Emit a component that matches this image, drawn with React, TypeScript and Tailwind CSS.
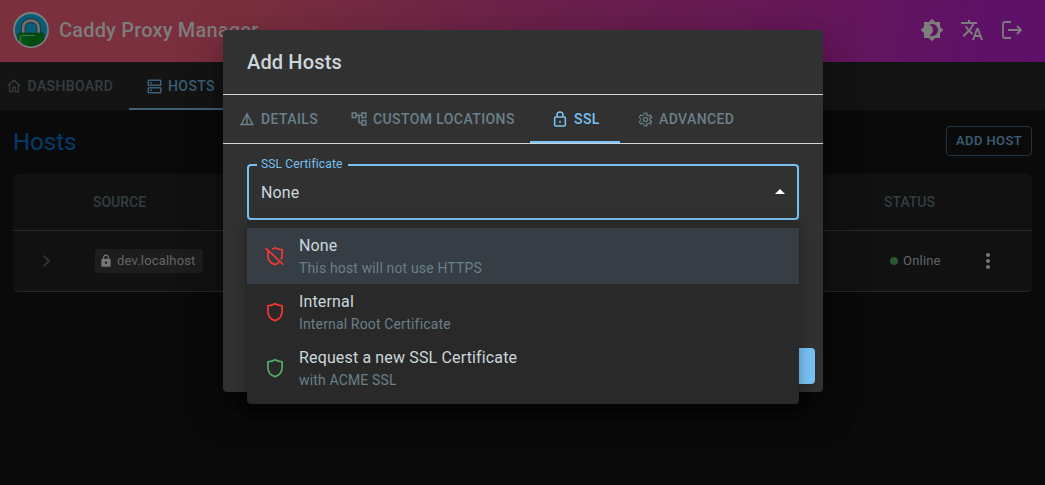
import React from "react";

type P = { d: string; className?: string; size?: number };
const Ico = ({ d, className = "", size = 16 }: P) => (
  <svg width={size} height={size} viewBox="0 0 24 24" fill="currentColor" fillRule="evenodd" className={"shrink-0 " + className}>
    <path d={d} />
  </svg>
);

const line = (children: React.ReactNode, size = 14, width = 2, extra = "") => (
  <svg width={size} height={size} viewBox="0 0 24 24" fill="none" stroke="currentColor" strokeWidth={width} strokeLinejoin="miter" className={"shrink-0 " + extra}>
    {children}
  </svg>
);

const BRIGHTNESS = "M20 8.69V4h-4.69L12 .69 8.69 4H4v4.69L.69 12 4 15.31V20h4.69L12 23.31 15.31 20H20v-4.69L23.31 12 20 8.69zM12 18c-.89 0-1.74-.2-2.5-.55C11.56 16.5 13 14.42 13 12s-1.44-4.5-3.5-5.45C10.26 6.2 11.11 6 12 6c3.31 0 6 2.69 6 6s-2.69 6-6 6z";
const TRANSLATE = "m12.87 15.07-2.54-2.51.03-.03c1.74-1.94 2.98-4.17 3.71-6.53H17V4h-7V2H8v2H1v1.99h11.17C11.5 7.92 10.44 9.75 9 11.35 8.07 10.32 7.3 9.19 6.69 8h-2c.73 1.63 1.73 3.17 2.98 4.56l-5.09 5.02L4 19l5-5 3.11 3.11.76-2.04zM18.5 10h-2L12 22h2l1.12-3h4.75L21 22h2l-4.5-12zm-2.62 7 1.62-4.33L19.12 17h-3.24z";
const LOCK = "M18 8h-1V6c0-2.76-2.24-5-5-5S7 3.24 7 6v2H6c-1.1 0-2 .9-2 2v10c0 1.1.9 2 2 2h12c1.1 0 2-.9 2-2V10c0-1.1-.9-2-2-2zm-6 9c-1.1 0-2-.9-2-2s.9-2 2-2 2 .9 2 2-.9 2-2 2zm3.1-9H8.9V6c0-1.71 1.39-3.1 3.1-3.1 1.71 0 3.1 1.39 3.1 3.1v2z";
const TREE = "M22 11V3h-7v3H9V3H2v8h7V8h2v10h4v3h7v-8h-7v3h-2V8h2v3h7zM7 9H4V5h3v4zm10 6h3v4h-3v-4zm0-10h3v4h-3V5z";
const DOTS = "M12 8c1.1 0 2-.9 2-2s-.9-2-2-2-2 .9-2 2 .9 2 2 2zm0 2c-1.1 0-2 .9-2 2s.9 2 2 2 2-.9 2-2-.9-2-2-2zm0 6c-1.1 0-2 .9-2 2s.9 2 2 2 2-.9 2-2-.9-2-2-2z";
const GEAR = "M19.43 12.98c.04-.32.07-.64.07-.98s-.03-.66-.07-.98l2.11-1.65c.19-.15.24-.42.12-.64l-2-3.46a.5.5 0 0 0-.61-.22l-2.49 1c-.52-.4-1.08-.73-1.69-.98l-.38-2.65A.488.488 0 0 0 14 2h-4c-.25 0-.46.18-.49.42l-.38 2.65c-.61.25-1.17.59-1.69.98l-2.49-1a.5.5 0 0 0-.61.22l-2 3.46c-.13.22-.07.49.12.64l2.11 1.65c-.04.32-.07.65-.07.98s.03.66.07.98l-2.11 1.65c-.19.15-.24.42-.12.64l2 3.46c.12.22.39.3.61.22l2.49-1c.52.4 1.08.73 1.69.98l.38 2.65c.03.24.24.42.49.42h4c.25 0 .46-.18.49-.42l.38-2.65c.61-.25 1.17-.59 1.69-.98l2.49 1a.5.5 0 0 0 .61-.22l2-3.46c.12-.22.07-.49-.12-.64l-2.11-1.65zm-1.98-1.71c.04.31.05.52.05.73s-.02.43-.05.73l-.14 1.13 1.97 1.55-.98 1.69-2.32-.94-.95.73c-.41.31-.8.54-1.21.71l-1.04.43-.35 2.47h-1.86l-.35-2.47-1.04-.43c-.43-.18-.81-.4-1.2-.7l-.96-.74-2.33.94-.97-1.68 1.98-1.54-.14-1.13c-.03-.31-.06-.54-.06-.75s.03-.43.06-.73l.14-1.13-1.98-1.54.97-1.68 2.33.94.95-.73c.4-.3.79-.53 1.2-.7l1.05-.43.35-2.47h1.86l.35 2.47 1.04.43c.43.18.81.4 1.2.7l.96.74 2.32-.94.98 1.68-1.97 1.54.14 1.12zM12 8c-2.21 0-4 1.79-4 4s1.79 4 4 4 4-1.79 4-4-1.79-4-4-4zm0 6c-1.1 0-2-.9-2-2s.9-2 2-2 2 .9 2 2-.9 2-2 2z";
const SHIELD = "M12 2.200Q15.500 4.200 20.500 4.500V11c0 5.300-3.200 9.600-8.500 11.300C6.700 20.600 3.500 16.300 3.500 11V4.500Q8.500 4.200 12 2.200z";

const Logo = () => (
  <svg width="36" height="36" viewBox="0 0 36 36" className="shrink-0">
    <defs>
      <clipPath id="disc"><circle cx="18" cy="18" r="16.400" /></clipPath>
      <linearGradient id="body" x1="0" y1="0" x2="1" y2="0">
        <stop offset="0" stopColor="#0d5a1e" />
        <stop offset="0.500" stopColor="#004a0e" />
        <stop offset="1" stopColor="#044d12" />
      </linearGradient>
    </defs>
    <circle cx="18" cy="18" r="17" fill="#055e76" stroke="#7c7f80" strokeWidth="1.800" />
    <g clipPath="url(#disc)">
      <path d="M10.200 22v-6.500a7.700 7 0 0 1 15.400 0V22" fill="none" stroke="#2f3436" strokeWidth="4.800" />
      <path d="M10.200 22v-6.500a7.700 7 0 0 1 15.400 0V22" fill="none" stroke="#6f7274" strokeWidth="2.600" />
      <rect x="4.500" y="21" width="26.500" height="14" rx="2.500" fill="url(#body)" stroke="#06330e" strokeWidth=".6" />
      <path d="M7.500 31v-5.500q0-2 2-2H22" fill="none" stroke="#3f7549" strokeWidth="1" />
    </g>
  </svg>
);

type TabProps = { icon: React.ReactNode; label: string; active?: boolean; className: string };
const DialogTab = ({ icon, label, active, className }: TabProps) => (
  <div className={"relative flex h-12 items-center whitespace-nowrap text-sm font-medium tracking-[0.4px] " + (active ? "text-[#78c0f2] " : "text-[#69808a] ") + className}>
    {icon}
    <span>{label}</span>
    {active && <i className="absolute inset-x-0 bottom-0 h-0.5 bg-[#80c5f5]" />}
  </div>
);

const options = [
  { title: "None", note: "This host will not use HTTPS", color: "text-[#f93732]", off: true },
  { title: "Internal", note: "Internal Root Certificate", color: "text-[#f93732]", off: false },
  { title: "Request a new SSL Certificate", note: "with ACME SSL", color: "text-[#55ad65]", off: false },
];

export default function App() {
  return (
    <div className="relative h-[485px] w-[1045px] overflow-hidden bg-[#0a0a0a] font-[Roboto,sans-serif]">
      <header className="flex h-[62px] items-center bg-[linear-gradient(100deg,#7b303e_0%,#7a2f3e_25%,#6b214a_50%,#65175a_78%,#5e1167_94%,#5d1067_100%)] pb-0.5 pl-[13px] pr-[21px] text-[#7d7d7d]">
        <Logo />
        <span className="ml-[10px] text-xl font-medium tracking-[0.18px]">Caddy Proxy Manager</span>
        <div className="ml-auto flex gap-4">
          <Ico d={BRIGHTNESS} size={24} />
          <Ico d={TRANSLATE} size={24} />
          {line(<path d="M11 4H5a2 2 0 0 0-2 2v12a2 2 0 0 0 2 2h6M8 12h13M17 8l4 4-4 4" />, 24, 1.8)}
        </div>
      </header>
      <nav className="flex h-12 bg-[#141414] text-sm font-medium tracking-[0.4px]">
        <div className="flex w-[129px] items-center pl-[7px] text-[#343e42]">
          {line(<path d="M1 12 12 2l11 10M4.500 10v11.500H10V14h4v7.500h5.500V10" />, 14, 2.2)}
          <span className="ml-[6.500px]">DASHBOARD</span>
        </div>
        <div className="flex w-[102px] items-center border-b-2 border-[#3e6078] pl-[18px] pt-0.5 text-[#3c5f79]">
          {line(<><rect x="2" y="2" width="20" height="8" rx="1" /><rect x="2" y="14" width="20" height="8" rx="1" /><path d="M5 6h3M5 18h3" /></>, 15, 2.4)}
          <span className="ml-[6px]">HOSTS</span>
        </div>
      </nav>
      <main className="px-[13px]">
        <div className="flex h-16 items-center justify-between">
          <h1 className="text-2xl text-[#033c6a]">Hosts</h1>
          <div className="mb-0.5 flex h-[30px] w-[86px] items-center justify-center rounded border border-[#203440] text-[13px] font-medium tracking-[0.4px] text-[#3c5f79]">ADD HOST</div>
        </div>
        <section className="h-[118px] rounded-md border-b border-[#292929] bg-[#111]">
          <div className="flex h-[57px] items-center border-b border-[#292929] text-sm font-medium text-[#343e42]">
            <span className="ml-20">SOURCE</span>
            <span className="ml-auto mr-[97px]">STATUS</span>
          </div>
          <div className="flex h-[60px] items-center">
            {line(<path d="m9 5 7 7-7 7" />, 18, 2.4, "ml-6 text-[#333]")}
            <div className="ml-10 flex h-6 w-[108px] items-center rounded-[3px] bg-[#1d1d1d] pl-1 text-[13px] tracking-[0.17px] text-[#626668]">
              <Ico d={LOCK} size={14} className="text-[#777]" />
              <span className="ml-1">dev.localhost</span>
            </div>
            <i className="ml-auto size-2 rounded-full bg-[#2b5632]" />
            <span className="ml-[5px] w-[73px] text-[13px] tracking-[0.2px] text-[#626668]">Online</span>
            <Ico d={DOTS} size={24} className="mr-8 text-[#777]" />
          </div>
        </section>
      </main>

      <section className="absolute left-[223px] top-[30px] h-[362px] w-[600px] rounded bg-[#313131] shadow-[0_11px_15px_-7px_rgba(0,0,0,.2),0_24px_38px_3px_rgba(0,0,0,.14),0_9px_46px_8px_rgba(0,0,0,.12)]">
        <h2 className="flex h-[65px] items-center border-b border-[#cbd7dc] px-6 text-xl font-medium tracking-[0.15px] text-[#cbd7dc]">Add Hosts</h2>
        <div className="flex h-[49px] border-b border-[#cbd7dc]">
          <DialogTab className="w-[111px] gap-[7px] pl-[17px]" label="DETAILS" icon={line(<path d="M12 3 22 21.500H2zM12 3v18" />, 14, 2.500)} />
          <DialogTab className="w-[196px] gap-[5px] pl-4" label="CUSTOM LOCATIONS" icon={<Ico d={TREE} size={18} />} />
          <DialogTab className="w-[90px] gap-[6px] pl-[22px]" active label="SSL" icon={line(<><rect x="4" y="9" width="16" height="13.500" rx="1.500" /><path d="M7.500 9V6a4.500 4.500 0 0 1 9 0v3M12 14.500v3" /></>, 16, 2.300)} />
          <DialogTab className="w-[132px] gap-[5px] pl-[17px]" label="ADVANCED" icon={<Ico d={GEAR} size={17} />} />
        </div>
        <div className="px-6 pt-5">
          <div className="relative flex h-14 items-center justify-between rounded border-2 border-[#78c0f2] pl-3 pr-[5px] text-base tracking-[0.15px] text-[#cbd7dc]">
            <span className="absolute -top-[10px] left-2 bg-[#313131] pl-1 pr-[5px] text-xs leading-4 text-[#78c0f2]">SSL Certificate</span>
            <span className="pt-0.5">None</span>
            <Ico d="m7 14 5-5 5 5z" size={24} className="text-white" />
          </div>
        </div>
        <div className="mr-2 mt-32 flex justify-end">
          <div className="h-9 w-20 rounded bg-[#78c0f2] shadow-md" />
        </div>
      </section>

      <ul className="absolute left-[247px] top-[220px] w-[552px] rounded bg-[#292929] py-2 shadow-[0_5px_5px_-3px_rgba(0,0,0,.2),0_8px_10px_1px_rgba(0,0,0,.14),0_3px_14px_2px_rgba(0,0,0,.12)]">
        {options.map((o) => (
          <li key={o.title} className={"flex h-14 items-center gap-3 pl-4 " + (o.off ? "bg-[#363d44]" : "")}>
            <span className={o.color}>
              {line(o.off ? <path d="M8.500 3.900Q10.400 3.200 12 2.200 15.500 4.200 20.500 4.500V11c0 2-.4 3.800-1.300 5.400M3.500 6.500V11c0 5.300 3.200 9.600 8.500 11.300 2-.6 3.600-1.700 4.900-3M.8 2.500l21.400 20" /> : <path d={SHIELD} />, 20, 2, "mx-[2px]")}
            </span>
            <div>
              <div className="pt-px text-base leading-6 tracking-[0.15px] text-[#cbd7dc]">{o.title}</div>
              <div className="-mt-px text-sm leading-[22px] tracking-[0.15px] text-[#69808a]">{o.note}</div>
            </div>
          </li>
        ))}
      </ul>
    </div>
  );
}
